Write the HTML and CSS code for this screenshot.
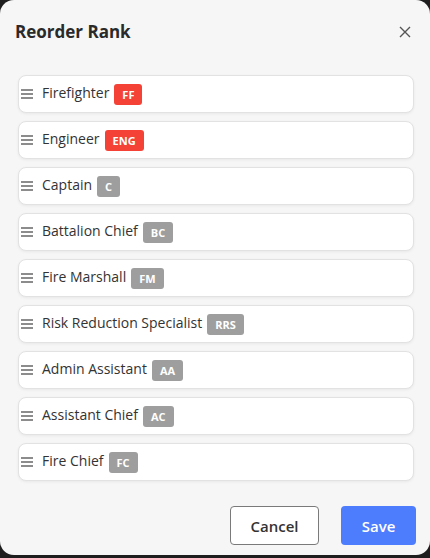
FILE: index.html
```html
<!DOCTYPE html>
<html>
<head>
<meta charset="utf-8">
<link rel="stylesheet" href="styles.css">
</head>
<body>
<div class="modal">
  <div class="header">
    <h2 class="title">Reorder Rank</h2>
    <button class="close" aria-label="Close">
      <svg width="12" height="12" viewBox="0 0 12 12"><path d="M1 1L11 11M11 1L1 11" stroke="#555" stroke-width="1.4" fill="none"/></svg>
    </button>
  </div>
  <ul class="list">
    <li class="item"><span class="handle"><i></i><i></i><i></i></span><span class="name">Firefighter</span><span class="badge red">FF</span></li>
    <li class="item"><span class="handle"><i></i><i></i><i></i></span><span class="name">Engineer</span><span class="badge red">ENG</span></li>
    <li class="item"><span class="handle"><i></i><i></i><i></i></span><span class="name">Captain</span><span class="badge">C</span></li>
    <li class="item"><span class="handle"><i></i><i></i><i></i></span><span class="name">Battalion Chief</span><span class="badge">BC</span></li>
    <li class="item"><span class="handle"><i></i><i></i><i></i></span><span class="name">Fire Marshall</span><span class="badge">FM</span></li>
    <li class="item"><span class="handle"><i></i><i></i><i></i></span><span class="name">Risk Reduction Specialist</span><span class="badge">RRS</span></li>
    <li class="item"><span class="handle"><i></i><i></i><i></i></span><span class="name">Admin Assistant</span><span class="badge">AA</span></li>
    <li class="item"><span class="handle"><i></i><i></i><i></i></span><span class="name">Assistant Chief</span><span class="badge">AC</span></li>
    <li class="item"><span class="handle"><i></i><i></i><i></i></span><span class="name">Fire Chief</span><span class="badge">FC</span></li>
  </ul>
  <div class="footer">
    <button class="btn cancel">Cancel</button>
    <button class="btn save">Save</button>
  </div>
</div>
</body>
</html>
```

FILE: styles.css
```css
* { box-sizing: border-box; }
html, body { margin: 0; padding: 0; }
body {
  background: #1e1e1e;
  height: 558px;
  font-family: "Open Sans", "Liberation Sans", sans-serif;
  overflow: hidden;
}
.modal {
  background: #f6f6f6;
  height: 555px;
  border-radius: 14px;
  display: flex;
  flex-direction: column;
}
.header {
  display: flex;
  align-items: center;
  justify-content: space-between;
  padding: 20px 19px 0 15px;
  height: 44px;
}
.title {
  margin: 0;
  font-size: 17px;
  line-height: 24px;
  font-weight: 700;
  color: #2a2a2a;
}
.close {
  border: 0;
  background: none;
  padding: 0;
  width: 12px;
  height: 12px;
  display: flex;
}
.list {
  list-style: none;
  margin: 31px 16px 0 18px;
  padding: 0;
  display: flex;
  flex-direction: column;
  gap: 8px;
}
.item {
  height: 38px;
  background: #fff;
  border: 1px solid #e2e2e2;
  border-radius: 8px;
  box-shadow: 0 1px 3px rgba(0,0,0,0.06);
  display: flex;
  align-items: center;
  padding-left: 2px;
}
.handle {
  width: 12px;
  display: flex;
  flex-direction: column;
  gap: 2px;
  margin-right: 9px;
  margin-top: -1px;
}
.handle i {
  display: block;
  height: 2px;
  background: #8c8c8c;
}
.name {
  font-size: 14px;
  color: #333;
  line-height: 20px;
  margin-top: -3px;
}
.badge {
  margin-left: 5px;
  height: 21px;
  padding: 0 8px;
  border-radius: 3px;
  background: #9e9e9e;
  color: #fff;
  font-size: 11px;
  font-weight: 700;
  display: inline-flex;
  align-items: center;
  line-height: 1;
}
.badge.red { background: #f44336; }
.footer {
  display: flex;
  justify-content: flex-end;
  gap: 22px;
  padding: 25px 14px 0 0;
}
.btn {
  height: 39px;
  border-radius: 4px;
  font-family: "Open Sans", "Liberation Sans", sans-serif;
  font-size: 15px;
  font-weight: 600;
  padding: 0;
}
.cancel {
  width: 89px;
  background: #fff;
  border: 1px solid #7a7a7a;
  color: #333;
}
.save {
  width: 75px;
  background: #4d7dfd;
  border: 0;
  color: #fff;
}
```
